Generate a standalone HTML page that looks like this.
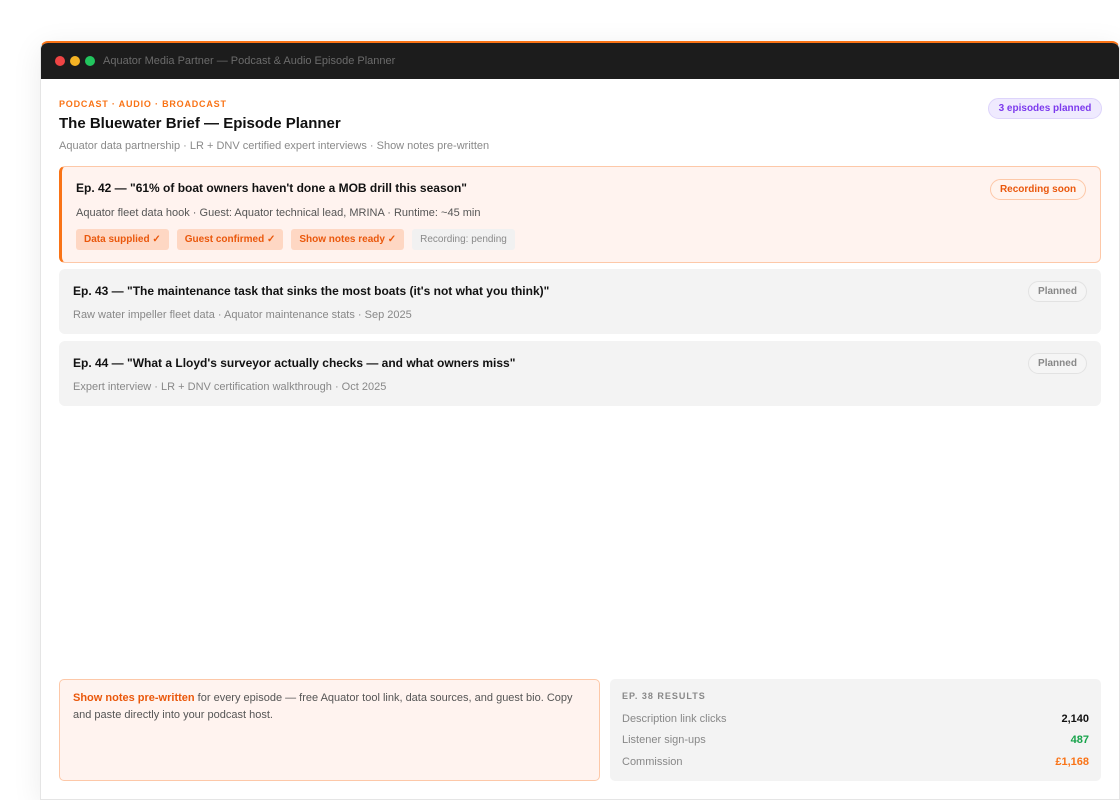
<!DOCTYPE html>
<html><head><meta charset="utf-8"><style>
*{box-sizing:border-box;margin:0;padding:0}
body{width:1120px;height:800px;background:#fff;font-family:"Liberation Sans",Arial,sans-serif;overflow:hidden;position:relative}
.win{position:absolute;left:40px;top:41px;width:1080px;height:759px;border-radius:8px 8px 0 0;border-top:2px solid #f97316;background:#fff;box-shadow:0 6px 30px rgba(0,0,0,.08);border-left:1px solid #e5e5e5;border-right:1px solid #e5e5e5;border-bottom:1px solid #e5e5e5;overflow:hidden}
.tb{height:36px;background:#1c1c1c;display:flex;align-items:center;padding-left:14px}
.dot{width:10px;height:10px;border-radius:50%;margin-right:5px}
.tb span{color:#6b6b6b;font-size:11px;margin-left:3px}
.kick{position:absolute;left:18px;top:56px;font-size:9px;font-weight:bold;color:#f97316;letter-spacing:0.8px}
h1{position:absolute;left:18px;top:72px;font-size:15px;font-weight:bold;color:#111}
.sub{position:absolute;left:18px;top:97px;font-size:11px;color:#8a8a8a}
.pill{position:absolute;border-radius:12px;font-size:10px;font-weight:bold;display:flex;align-items:center;justify-content:center}
.card{position:absolute;left:18px;width:1042px;border-radius:6px;background:#f3f3f3}
.card .t{position:absolute;left:14px;font-size:12px;font-weight:bold;color:#111}
.card .m{position:absolute;left:14px;font-size:11px;color:#888}
.tag{display:inline-block;height:21px;line-height:21px;padding:0 8px;border-radius:3px;font-size:10px;font-weight:bold;margin-right:8px;background:#fed7c3;color:#ea580c}
.row{position:absolute;left:12px;right:12px;font-size:11px;color:#888}
.row b{position:absolute;right:0;top:0}
</style></head><body>
<div class="win">
<div class="tb"><div class="dot" style="background:#ef4444"></div><div class="dot" style="background:#f5b324"></div><div class="dot" style="background:#22c55e"></div><span>Aquator Media Partner — Podcast &amp; Audio Episode Planner</span></div>
<div class="kick">PODCAST · AUDIO · BROADCAST</div>
<h1>The Bluewater Brief — Episode Planner</h1>
<div class="sub">Aquator data partnership · LR + DNV certified expert interviews · Show notes pre-written</div>
<div class="pill" style="left:947px;top:55px;width:114px;height:21px;background:#efeafe;border:1px solid #ddd4fb;color:#7c3aed">3 episodes planned</div>

<div class="card" style="top:123px;height:97px;background:#fff3ef;border:1px solid #fdc8a8;border-left:3px solid #f97316">
<div class="t" style="top:14px">Ep. 42 — "61% of boat owners haven't done a MOB drill this season"</div>
<div class="m" style="top:40px;color:#555">Aquator fleet data hook · Guest: Aquator technical lead, MRINA · Runtime: ~45 min</div>
<div style="position:absolute;left:14px;top:62px;white-space:nowrap;font-size:0"><span class="tag">Data supplied ✓</span><span class="tag">Guest confirmed ✓</span><span class="tag">Show notes ready ✓</span><span class="tag" style="background:#f1f1f1;color:#8a8a8a;font-weight:normal">Recording: pending</span></div>
<div class="pill" style="right:14px;top:12px;width:96px;height:21px;background:#fff4ee;border:1px solid #fdc8a8;color:#ea580c">Recording soon</div>
</div>

<div class="card" style="top:226px;height:65px">
<div class="t" style="top:15px">Ep. 43 — "The maintenance task that sinks the most boats (it's not what you think)"</div>
<div class="m" style="top:40px">Raw water impeller fleet data · Aquator maintenance stats · Sep 2025</div>
<div class="pill" style="right:14px;top:12px;width:59px;height:21px;background:#f5f5f5;border:1px solid #e2e2e2;color:#888">Planned</div>
</div>

<div class="card" style="top:298px;height:65px">
<div class="t" style="top:15px">Ep. 44 — "What a Lloyd's surveyor actually checks — and what owners miss"</div>
<div class="m" style="top:40px">Expert interview · LR + DNV certification walkthrough · Oct 2025</div>
<div class="pill" style="right:14px;top:12px;width:59px;height:21px;background:#f5f5f5;border:1px solid #e2e2e2;color:#888">Planned</div>
</div>

<div style="position:absolute;left:18px;top:636px;width:541px;height:102px;background:#fff3ef;border:1px solid #fdc8a8;border-radius:5px;padding:10px 13px;font-size:11px;line-height:17px;color:#555"><b style="color:#ea580c">Show notes pre-written</b> for every episode — free Aquator tool link, data sources, and guest bio. Copy and paste directly into your podcast host.</div>

<div style="position:absolute;left:569px;top:636px;width:491px;height:102px;background:#f3f3f3;border-radius:5px">
<div style="position:absolute;left:12px;top:12px;font-size:9px;font-weight:bold;color:#888;letter-spacing:1px">EP. 38 RESULTS</div>
<div class="row" style="top:34px">Description link clicks<b style="color:#111">2,140</b></div>
<div class="row" style="top:55px">Listener sign-ups<b style="color:#16a34a">487</b></div>
<div class="row" style="top:77px">Commission<b style="color:#f97316">£1,168</b></div>
</div>
</div>
</body></html>
